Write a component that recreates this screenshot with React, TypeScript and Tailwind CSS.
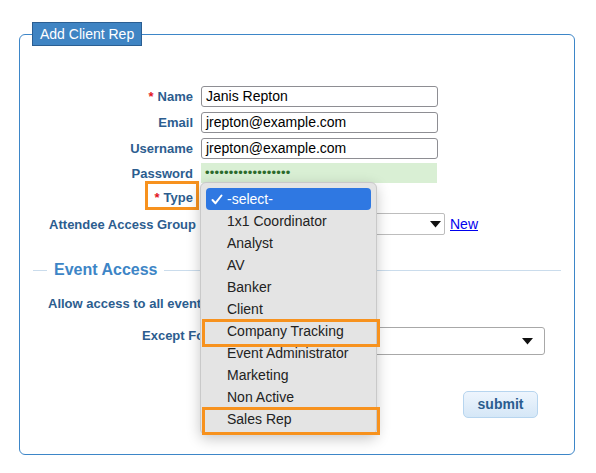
import React from 'react';

const font = { fontFamily: '"Liberation Sans", Arial, Helvetica, sans-serif' };

const TYPES = [
  '1x1 Coordinator',
  'Analyst',
  'AV',
  'Banker',
  'Client',
  'Company Tracking',
  'Event Administrator',
  'Marketing',
  'Non Active',
  'Sales Rep',
];

const labelCls = 'shrink-0 text-right font-bold text-[13px] leading-none text-[#2c5d8f]';
const inputCls =
  'h-[21px] w-[237px] rounded-[3px] border border-[#8e8e93] bg-white px-[4px] text-[14px] leading-[19px] text-black';

const Req = () => <span className="mr-[4px] text-[#e3141b]">*</span>;

const Arrow = () => (
  <svg width="11" height="7" viewBox="0 0 11 7" className="shrink-0">
    <path d="M0 0 H11 L5.5 6.5 Z" fill="#111" />
  </svg>
);

const TypeMenu: React.FC = () => (
  <div className="absolute left-[-2px] top-[-5px] z-20 h-[253px] w-[177px] rounded-[6px] border border-[#c9c9c9] bg-[#e4e4e4] px-[5px] pt-[5px] shadow-[0_4px_14px_rgba(0,0,0,0.22)]">
    <div className="flex h-[22px] items-center rounded-[4px] bg-[#2f78e2] pl-[5px] text-[14px] text-white">
      <svg width="12" height="11" viewBox="0 0 12 11" className="mr-[4px]">
        <path d="M1.5 6 L4.5 9.2 L10.5 1.5" stroke="#fff" strokeWidth="2" fill="none" strokeLinecap="round" strokeLinejoin="round" />
      </svg>
      -select-
    </div>
    {TYPES.map((t) => (
      <div key={t} className="flex h-[22px] items-center pl-[21px] text-[14px] text-[#222]">
        {t}
      </div>
    ))}
    <div className="absolute left-[1px] top-[136px] h-[28px] w-[178px] border-[3px] border-[#f7921e]" />
    <div className="absolute left-[1px] top-[224px] h-[28px] w-[178px] border-[3px] border-[#f7921e]" />
  </div>
);

export default function App() {
  return (
    <div className="min-h-screen bg-white" style={font}>
      <fieldset className="ml-[19px] mt-[22px] w-[556px] rounded-[6px] border border-[#3d86c8] pb-[36px]">
        <legend className="ml-[12px] border border-[#2a5e92] bg-[#3f84c3] px-[7px] py-[2px] text-[14px] leading-[18px] text-white">
          Add Client Rep
        </legend>

        <div className="mt-[37px] flex flex-col">
          <div className="flex h-[26px] items-center gap-[8px]">
            <div className={`${labelCls} w-[173px]`}>
              <Req />Name
            </div>
            <div className={inputCls}>Janis Repton</div>
          </div>
          <div className="flex h-[26px] items-center gap-[8px]">
            <div className={`${labelCls} w-[173px]`}>Email</div>
            <div className={inputCls}>jrepton@example.com</div>
          </div>
          <div className="flex h-[26px] items-center gap-[8px]">
            <div className={`${labelCls} w-[173px]`}>Username</div>
            <div className={inputCls}>jrepton@example.com</div>
          </div>
          <div className="flex h-[24px] items-center gap-[8px]">
            <div className={`${labelCls} w-[173px]`}>Password</div>
            <div className="h-[20px] w-[236px] bg-[#d9efd4] px-[4px] text-[13px] leading-[20px] tracking-[0.2px] text-[#2d6b2d]">
              ••••••••••••••••••
            </div>
          </div>
          <div className="flex h-[24px] items-center gap-[8px]">
            <div className={`${labelCls} relative w-[173px]`}>
              <Req />Type
              <div className="absolute right-[-6px] top-[-10px] h-[29px] w-[54px] border-[3px] border-[#f7921e]" />
            </div>
            <div className="relative h-[22px] w-[170px] rounded-[3px] border border-[#bdbdbd] bg-white">
              <TypeMenu />
            </div>
          </div>
          <div className="flex h-[30px] items-center gap-[5px]">
            <div className={`${labelCls} w-[176px]`}>Attendee Access Group</div>
            <div className="flex h-[22px] w-[244px] items-center justify-end rounded-[2px] border border-[#bdbdbd] bg-white pr-[3px]">
              <Arrow />
            </div>
            <a href="#" className="text-[14px] text-[#0000ee] underline">
              New
            </a>
          </div>
        </div>

        <div className="mt-[21px] flex items-center px-[13px]">
          <div className="h-px w-[14px] bg-[#cadcec]" />
          <div className="mx-[7px] text-[16px] font-bold leading-[20px] text-[#3d85c6]">Event Access</div>
          <div className="h-px flex-1 bg-[#cadcec]" />
        </div>

        <div className="mt-[14px] flex h-[20px] items-center pl-[28px]">
          <div className="text-[13px] font-bold text-[#2c5d8f]">Allow access to all events</div>
          <input type="checkbox" className="ml-[8px]" />
        </div>

        <div className="mt-[13px] flex items-start pl-[122px]">
          <div className="pt-[2px] text-[13px] font-bold leading-[14px] text-[#2c5d8f]">Except For</div>
          <div className="ml-[8px] mr-[29px] flex h-[28px] flex-1 items-center justify-end rounded-[3px] border border-[#a8a8a8] bg-white pr-[11px]">
            <Arrow />
          </div>
        </div>

        <div className="mt-[36px] flex justify-end pr-[36px]">
          <button className="h-[27px] w-[75px] rounded-[5px] border border-[#b7d5ef] bg-gradient-to-b from-[#eef5fd] to-[#d5e7f7] text-[14px] font-bold text-[#2a5d8f]">
            submit
          </button>
        </div>
      </fieldset>
    </div>
  );
}
